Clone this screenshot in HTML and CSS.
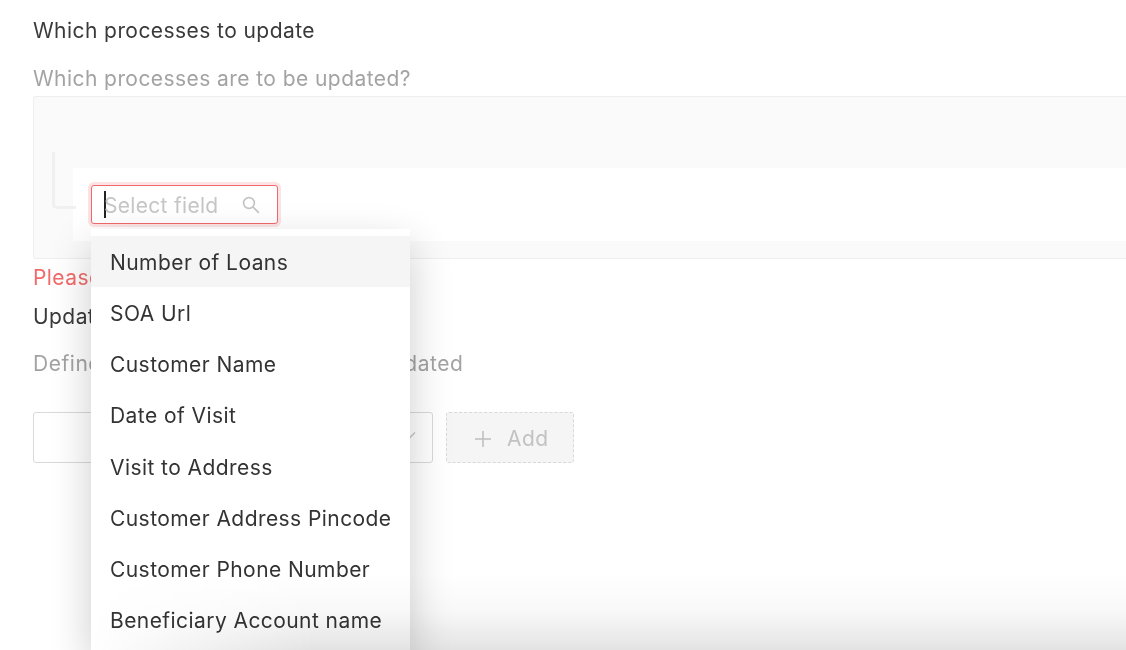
FILE: index.html
```html
<!DOCTYPE html>
<html lang="en">
<head>
<meta charset="utf-8">
<title>Update processes</title>
<link rel="stylesheet" href="styles.css">
</head>
<body>
<main class="page">
  <h2 class="label first">Which processes to update</h2>
  <p class="help">Which processes are to be updated?</p>
  <section class="filter-box">
    <div class="connector"></div>
    <div class="filter-row">
      <div class="select-wrap">
        <div class="select">
          <span class="caret"></span>
          <span class="placeholder">Select field</span>
          <svg class="search" width="20" height="20" viewBox="0 0 20 20" fill="none" stroke="#c4c4c4" stroke-width="1.6"><circle cx="8" cy="8" r="5.4"/><path d="M12 12l5.4 5.4" stroke-linecap="round"/></svg>
        </div>
        <ul class="menu">
          <li class="active">Number of Loans</li>
          <li>SOA Url</li>
          <li>Customer Name</li>
          <li>Date of Visit</li>
          <li>Visit to Address</li>
          <li>Customer Address Pincode</li>
          <li>Customer Phone Number</li>
          <li>Beneficiary Account name</li>
        </ul>
      </div>
    </div>
  </section>
  <p class="error">Please select a field</p>
  <h2 class="label update">Update values</h2>
  <p class="help second">Define the fields which are to be updated</p>
  <div class="actions">
    <div class="dropdown">
      <svg class="chevron" width="14" height="14" viewBox="0 0 14 14" fill="none" stroke="#c4c4c4" stroke-width="1.3"><path d="M2 4.5l5 5 5-5"/></svg>
    </div>
    <button class="add" type="button">
      <svg width="20" height="20" viewBox="0 0 20 20" fill="none" stroke="#bdbdbd" stroke-width="1.5"><path d="M10 2v16M2 10h16"/></svg>
      <span>Add</span>
    </button>
  </div>
</main>
<div class="fade"></div>
</body>
</html>
```
FILE: styles.css
```css
* { box-sizing: border-box; }
html, body { margin: 0; height: 650px; overflow: hidden; background: #fff; }
body { font-family: Inter, "Liberation Sans", sans-serif; color: #333; font-size: 21px; letter-spacing: .43px; position: relative; width: 1126px; }
.page { padding: 16px 0 0 33px; width: 1126px; }
.label { margin: 0; font-size: 21px; font-weight: 400; line-height: 29px; color: #3a3a3a; }
.help { margin: 19px 0 0; font-size: 21px; line-height: 29px; color: #a3a3a3; }
.filter-box { margin-top: 3px; height: 163px; background: #fafafa; border: 1px solid #eeeeee; border-right: 0; border-radius: 3px 0 0 3px; padding: 71px 0 0 39px; position: relative; }
.connector { position: absolute; left: 18px; top: 55px; width: 24px; height: 57px; border-left: 3px solid #f0f0f0; border-bottom: 3px solid #f0f0f0; border-bottom-left-radius: 5px; }
.filter-row { height: 73px; background: #fff; padding: 17px 0 0 18px; }
.select-wrap { position: relative; width: 187px; }
.select { height: 39px; width: 187px; border: 1px solid #f0696b; border-radius: 3px; box-shadow: 0 0 0 3px #fde3e3; background: #fff; display: flex; align-items: center; padding-left: 12px; position: relative; }
.caret { width: 2px; height: 27px; background: #222; flex: none; }
.placeholder { color: #c6c6c6; margin-left: -2px; padding-top: 2px; line-height: 27px; letter-spacing: .3px; }
.search { position: absolute; left: 149px; top: 9px; }
.menu { position: absolute; z-index: 5; left: 0; top: 44px; width: 319px; height: 421px; margin: 0; padding: 7px 0 0; list-style: none; background: #fff; box-shadow: 0 16px 40px rgba(0, 0, 0, .2); }
.menu li { height: 51.15px; line-height: 53px; padding-left: 19px; color: #333; white-space: nowrap; overflow: hidden; }
.menu li.active { background: #f5f5f5; }
.error { margin: 4px 0 0; line-height: 29px; color: #f36a6a; }
.update { margin-top: 10px; }
.second { margin-top: 18px; letter-spacing: .53px; }
.actions { display: flex; margin-top: 34px; gap: 13px; }
.dropdown { width: 400px; height: 51px; border: 1px solid #d9d9d9; border-radius: 3px; background: #fff; position: relative; }
.chevron { position: absolute; right: 15px; top: 15px; }
.add { width: 128px; height: 51px; border: 1px dashed #d9d9d9; border-radius: 3px; background: #f5f5f5; color: #c2c2c2; font: inherit; letter-spacing: inherit; display: flex; align-items: center; gap: 14px; padding: 2px 0 0 26px; }
.fade { position: absolute; z-index: 10; left: 0; right: 0; bottom: 0; height: 76px; background: linear-gradient(to bottom, #fff, #f8f8f8 50%, #e3e3e3); mix-blend-mode: multiply; -webkit-mask-image: linear-gradient(to right, transparent 8%, #000 28%); mask-image: linear-gradient(to right, transparent 8%, #000 28%); pointer-events: none; }
```
